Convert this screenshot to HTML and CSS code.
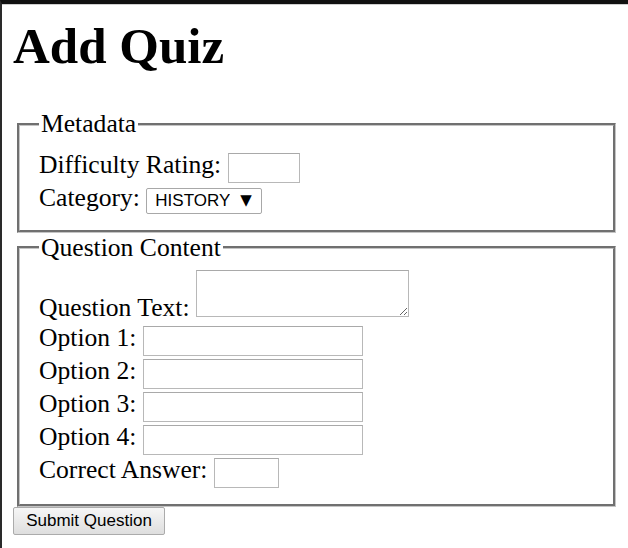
FILE: index.html
```html
<!DOCTYPE html>
<html lang="en">
<head>
<meta charset="utf-8">
<title>Add Quiz</title>
<link rel="stylesheet" href="styles.css">
</head>
<body>
<div class="page">
  <h1 class="title">Add Quiz</h1>
  <form class="quiz-form">
    <fieldset class="group group-meta">
      <legend class="group-title">Metadata</legend>
      <label class="field">Difficulty Rating: <input class="input input-rating" type="text"></label><br>
      <label class="field">Category: <span class="select-box"><select class="select"><option>HISTORY</option></select><span class="select-arrow">▼</span></span></label>
    </fieldset>
    <fieldset class="group group-content">
      <legend class="group-title">Question Content</legend>
      <label class="field">Question Text: <textarea class="textarea"></textarea></label><br>
      <label class="field">Option 1: <input class="input input-option" type="text"></label><br>
      <label class="field">Option 2: <input class="input input-option" type="text"></label><br>
      <label class="field">Option 3: <input class="input input-option" type="text"></label><br>
      <label class="field">Option 4: <input class="input input-option" type="text"></label><br>
      <label class="field">Correct Answer: <input class="input input-answer" type="text"></label>
    </fieldset>
    <button class="submit" type="submit">Submit Question</button>
  </form>
</div>
</body>
</html>
```
FILE: styles.css
```css
html, body {
  margin: 0;
  padding: 0;
  background: #ffffff;
}

.page {
  box-sizing: border-box;
  min-height: 100vh;
  border-top: 4px solid #111111;
  border-left: 2px solid #2a2a2a;
  box-shadow: inset 0 1px 0 #cfcfcf;
  padding: 0 12px 0 11px;
  font-family: "Liberation Serif", "Times New Roman", serif;
  font-size: 25.6px;
  color: #000000;
}

.title {
  margin: 13px 0 34px;
  font-size: 51px;
  font-weight: bold;
}

.quiz-form {
  margin: 0;
}

.group {
  margin: 0 0 0 4px;
  padding: 9px 20px 16px 19px;
  border: 3px groove #c4c4c4;
}

.group-meta {
  padding-top: 11px;
}

.group-content {
  padding-top: 7px;
  padding-bottom: 16px;
}

.group-title {
  padding: 0 2px;
}

.field {
  font-size: 25.6px;
}

.input {
  box-sizing: border-box;
  height: 30px;
  margin: 0;
  padding: 0 4px;
  border: 1px solid #b8b8b8;
  border-top-color: #a9a9a9;
  font-family: "Liberation Sans", Arial, sans-serif;
  font-size: 16px;
  background: #ffffff;
}

.input-rating {
  width: 72px;
}

.input-option {
  width: 220px;
}

.input-answer {
  width: 65px;
}

.textarea {
  box-sizing: border-box;
  width: 213px;
  height: 47px;
  margin: 0 0 -1px;
  padding: 2px;
  border: 1px solid #b8b8b8;
  border-top-color: #a9a9a9;
  font-family: "Liberation Mono", monospace;
  font-size: 13px;
  vertical-align: baseline;
}

.select-box {
  display: inline-flex;
  align-items: center;
  box-sizing: border-box;
  height: 26px;
  padding: 0 9px 0 8px;
  gap: 10px;
  border: 1px solid #a8a8a8;
  border-radius: 2px;
  background: #ffffff;
  font-family: "Liberation Sans", Arial, sans-serif;
  font-size: 17px;
}

.select {
  -webkit-appearance: none;
  appearance: none;
  border: 0;
  padding: 0;
  margin: 0;
  background: transparent;
  font: inherit;
  color: #000000;
}

.select-arrow {
  font-family: "DejaVu Sans", sans-serif;
  font-size: 15px;
  line-height: 1;
}

.submit {
  box-sizing: border-box;
  display: block;
  width: 152px;
  height: 28px;
  margin: 0;
  padding: 0 10px;
  border: 1px solid #ababab;
  border-radius: 2px;
  background: linear-gradient(#f6f6f6, #dedede);
  font-family: "Liberation Sans", Arial, sans-serif;
  font-size: 17px;
  color: #000000;
}
```
